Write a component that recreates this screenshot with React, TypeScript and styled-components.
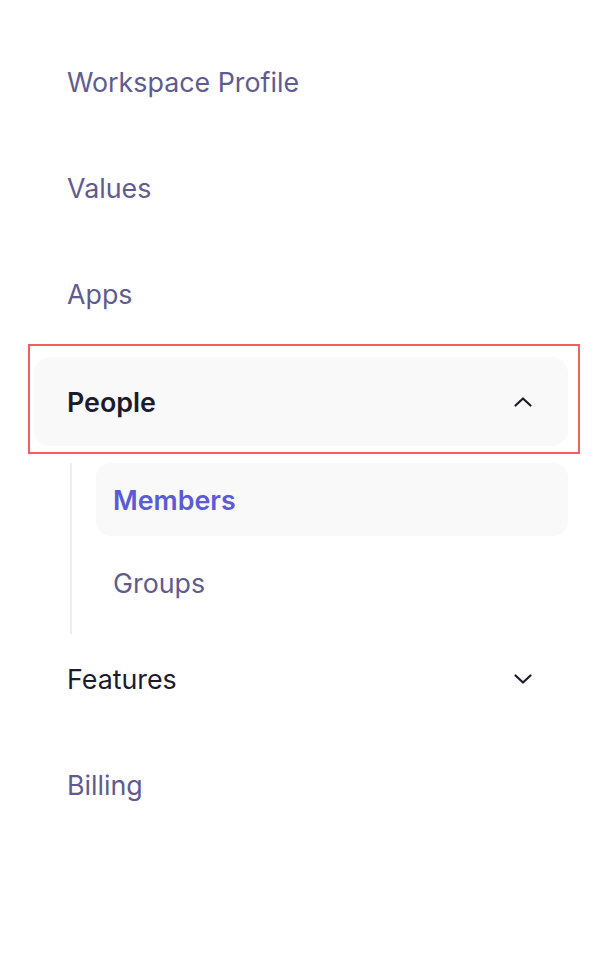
import React from 'react';
import styled, { createGlobalStyle } from 'styled-components';

const GlobalStyle = createGlobalStyle`
  html, body {
    margin: 0;
    padding: 0;
    background: #ffffff;
    font-family: Inter, "Noto Sans", sans-serif;
  }
`;

const Page = styled.div`
  width: 606px;
  min-height: 970px;
  box-sizing: border-box;
  padding: 37px 26px 0 28px;
`;

const Nav = styled.nav`
  display: flex;
  flex-direction: column;
`;

const Item = styled.div<{ $tone?: 'muted' | 'dark'; $bold?: boolean; $active?: boolean }>`
  display: flex;
  align-items: center;
  justify-content: space-between;
  height: 89px;
  margin: 0 12px 17px 6px;
  padding: 0 36px 0 33px;
  border-radius: 16px;
  box-sizing: border-box;
  font-size: 26.8px;
  font-weight: ${p => (p.$bold ? 600 : 400)};
  color: ${p => (p.$tone === 'dark' ? '#1c1b2e' : '#5f5b8e')};
  background: ${p => (p.$active ? '#f9f9f9' : 'transparent')};
`;

const Highlight = styled.div`
  border: 2px solid #ef5f61;
  padding: 11px 10px 6px 4px;
  margin-top: -11px;

  ${Item} {
    margin: 0;
  }
`;

const SubMenu = styled.div`
  display: flex;
  flex-direction: column;
  gap: 10px;
  margin: 9px 12px 0 42px;
  padding: 0 0 15px 24px;
  border-left: 2px solid #ececf1;
`;

const SubItem = styled.div<{ $active?: boolean }>`
  display: flex;
  align-items: center;
  height: 73px;
  padding-left: 17px;
  border-radius: 14px;
  font-size: 26.8px;
  font-weight: ${p => (p.$active ? 600 : 400)};
  color: ${p => (p.$active ? '#5b5bd6' : '#5f5b8e')};
  background: ${p => (p.$active ? '#f9f9f9' : 'transparent')};
`;

const Chevron: React.FC<{ up?: boolean }> = ({ up }) => (
  <svg width="18" height="10" viewBox="0 0 18 10" fill="none">
    <path
      d={up ? 'M1.5 8.5L9 1.5L16.5 8.5' : 'M1.5 1.5L9 8.5L16.5 1.5'}
      stroke="#1c1b2e"
      strokeWidth="2.2"
      strokeLinecap="round"
      strokeLinejoin="round"
    />
  </svg>
);

export default function App() {
  return (
    <Page>
      <GlobalStyle />
      <Nav>
        <Item>Workspace Profile</Item>
        <Item>Values</Item>
        <Item>Apps</Item>
        <Highlight>
          <Item $tone="dark" $bold $active>
            People
            <Chevron up />
          </Item>
        </Highlight>
        <SubMenu>
          <SubItem $active>Members</SubItem>
          <SubItem>Groups</SubItem>
        </SubMenu>
        <Item $tone="dark">
          Features
          <Chevron />
        </Item>
        <Item>Billing</Item>
      </Nav>
    </Page>
  );
}
